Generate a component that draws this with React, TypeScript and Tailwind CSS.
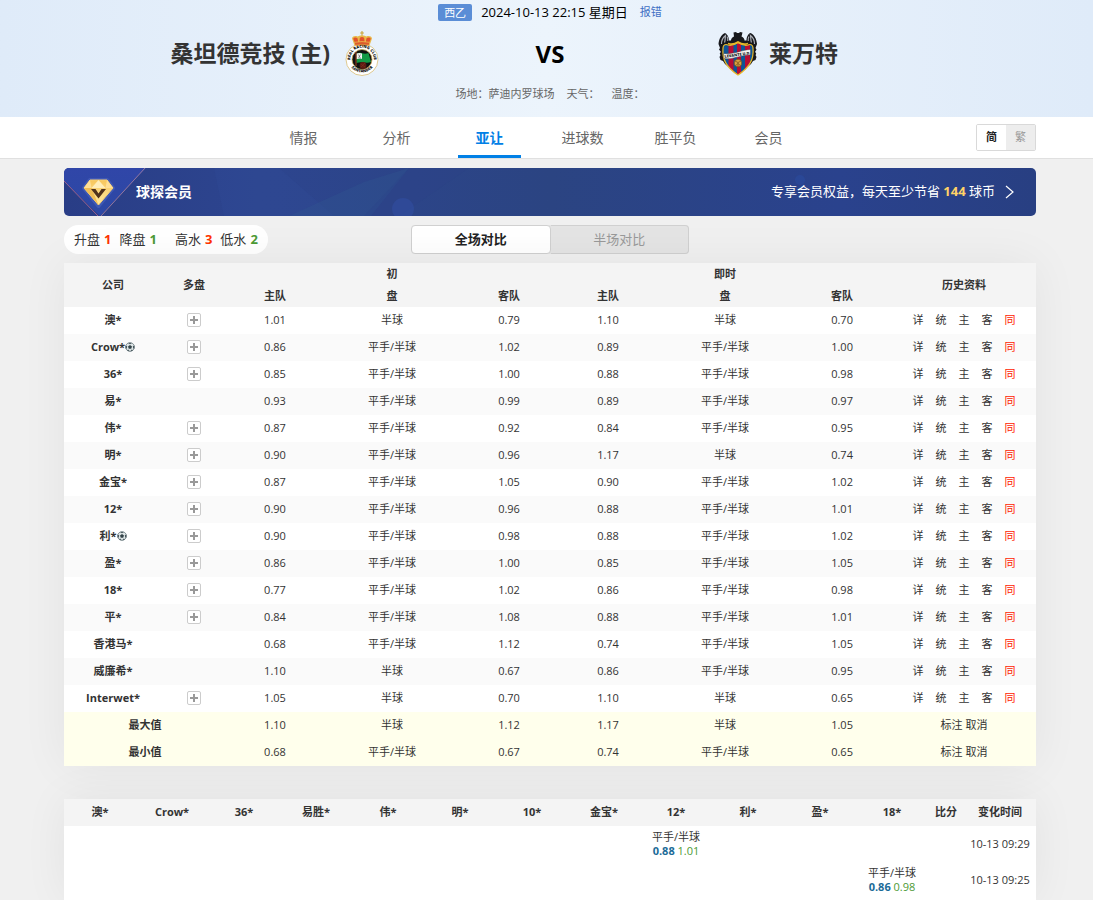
import React from "react";

const tabs = ["情报", "分析", "亚让", "进球数", "胜平负", "会员"];

type OddsRow = {
  name: string;
  ball?: boolean;
  more?: boolean;
  odds: string[];
};

const P = "平手/半球";
const B = "半球";

const rows: OddsRow[] = [
  { name: "澳*", more: true, odds: ["1.01", B, "0.79", "1.10", B, "0.70"] },
  { name: "Crow*", ball: true, more: true, odds: ["0.86", P, "1.02", "0.89", P, "1.00"] },
  { name: "36*", more: true, odds: ["0.85", P, "1.00", "0.88", P, "0.98"] },
  { name: "易*", odds: ["0.93", P, "0.99", "0.89", P, "0.97"] },
  { name: "伟*", more: true, odds: ["0.87", P, "0.92", "0.84", P, "0.95"] },
  { name: "明*", more: true, odds: ["0.90", P, "0.96", "1.17", B, "0.74"] },
  { name: "金宝*", more: true, odds: ["0.87", P, "1.05", "0.90", P, "1.02"] },
  { name: "12*", more: true, odds: ["0.90", P, "0.96", "0.88", P, "1.01"] },
  { name: "利*", ball: true, more: true, odds: ["0.90", P, "0.98", "0.88", P, "1.02"] },
  { name: "盈*", more: true, odds: ["0.86", P, "1.00", "0.85", P, "1.05"] },
  { name: "18*", more: true, odds: ["0.77", P, "1.02", "0.86", P, "0.98"] },
  { name: "平*", more: true, odds: ["0.84", P, "1.08", "0.88", P, "1.01"] },
  { name: "香港马*", odds: ["0.68", P, "1.12", "0.74", P, "1.05"] },
  { name: "威廉希*", odds: ["1.10", B, "0.67", "0.86", P, "0.95"] },
  { name: "Interwet*", more: true, odds: ["1.05", B, "0.70", "1.10", B, "0.65"] },
];

const summary = [
  { name: "最大值", odds: ["1.10", B, "1.12", "1.17", B, "1.05"] },
  { name: "最小值", odds: ["0.68", P, "0.67", "0.74", P, "0.65"] },
];

const companies = ["澳*", "Crow*", "36*", "易胜*", "伟*", "明*", "10*", "金宝*", "12*", "利*", "盈*", "18*"];

const changes = [
  { col: 8, home: "0.88", away: "1.01", time: "10-13 09:29" },
  { col: 11, home: "0.86", away: "0.98", time: "10-13 09:25" },
];

const HomeCrest = () => (
  <svg viewBox="0 0 40 46" className="h-[46px] w-10 shrink-0" aria-hidden="true">
    <circle cx="20" cy="28.500" r="16" fill="#fff" stroke="#d8bd74" strokeWidth=".8" />
    <path d="M19.500 0h1v1.500h1.300v1h-1.300V5h-1V2.500h-1.300v-1h1.300z" fill="#c9a02c" />
    <path d="M12.500 14.500 10 7.500c.5-2.500 3.500-3 5.500-2C17 4 23 4 24.500 5.500c2-1 5-.5 5.500 2l-2.500 7z" fill="#e9b94a" />
    <path d="M13 12l-1.800-4.200c.8-1.800 3-1.800 4.300-.5l1 4.700zM17.300 11.500 17.800 7c1-1.500 3.400-1.500 4.400 0l.5 4.500zM23.500 12l1-4.700c1.300-1.300 3.500-1.300 4.300.5L27 12z" fill="#e2522c" />
    <path d="M12.800 11h14.400l-.5 3.500H13.300z" fill="#dc5a2c" />
    <path d="M12.600 11.300q7.400-1.500 14.800 0M13.300 14.300q6.700-1 13.400 0" fill="none" stroke="#f0c650" strokeWidth=".7" />
    <circle cx="20" cy="28.500" r="10" fill="#111" stroke="#c9a955" strokeWidth=".8" />
    <path d="M14.500 22.500c4.500-2 6.500 1.500 12-.5l2.500 9c-5 2-9-1-14.500 1z" fill="#149a45" />
    <path d="M14.500 22.500c2.500-1 4-.6 5.500 0v5.500c-2-.8-3.500-.6-5.500.3z" fill="#f3f3f3" />
    <path d="M16.500 23.500l1.800 3.500M18.500 23.500l-2 3.500" stroke="#444" strokeWidth=".5" />
    <path d="M14 21v14" stroke="#a03a20" strokeWidth="1" />
    <circle cx="21" cy="34.500" r="3.400" fill="#5d1c12" />
    <path d="M19 33l4 3m0-4-4 4" stroke="#8d3421" strokeWidth=".5" />
    <path id="crest-top" d="M8.500 31a11.800 11.800 0 1 1 23 0" fill="none" />
    <path id="crest-bottom" d="M6.500 32a14.400 14.400 0 0 0 27 0" fill="none" />
    <g fontFamily="Open Sans, sans-serif" fontWeight="800" fontSize="3.900" fill="#111" textAnchor="middle">
      <text>
        <textPath href="#crest-top" startOffset="50%">REAL RACING CLUB</textPath>
      </text>
      <text>
        <textPath href="#crest-bottom" startOffset="50%">SANTANDER</textPath>
      </text>
    </g>
  </svg>
);

const AwayCrest = () => (
  <svg viewBox="0 0 40 46" className="h-[46px] w-10 shrink-0" aria-hidden="true">
    <path
      d="M15.500 1.500 18 1l1 1h2l1-1 2.500.5-1 4c2 1 3 2 3 4h2c0-4 2-7 4-7.500 4 2 6 6 6.500 11l-1.500 4 1 1.500-1.500 2.500c1.500 1 1.500 2 .5 3l1 2-1 3-2.500 1-2 3-13 11-13-11-2-3-2.500-1-1-3 1-2c-1-1-1-2 .5-3L1 18.500 2 17 .5 13C1 8 3 4 7 2c2 1 4 4 4 7.500h2c0-2 1-3 3-4z"
      fill="#17181c"
    />
    <path d="M3.500 13c0-4 2-7 4-8.500-.5 3 0 4.500-1 7M36.500 13c0-4-2-7-4-8.500.5 3 0 4.500 1 7M9 5.500c1 1.500 1 3 .8 4.500M31 5.500c-1 1.500-1 3-.8 4.500" fill="none" stroke="#a9adb5" strokeWidth="1.200" />
    <clipPath id="shield">
      <path d="M5 17c0-3.500 3-4 5-3 3 1 6 0 10-2.500 4 2.500 7 3.500 10 2.500 2-1 5-.5 5 3 1 11-3 19-15 27C8 36 4 28 5 17z" />
    </clipPath>
    <g clipPath="url(#shield)">
      <path d="M3 10h34v35H3z" fill="#0e5596" />
      <path d="M10.500 10h5v35h-5zM19 10h4v35h-4zM27 10h5v35h-5z" fill="#b80d35" />
    </g>
    <path
      d="M5 17c0-3.500 3-4 5-3 3 1 6 0 10-2.500 4 2.500 7 3.500 10 2.500 2-1 5-.5 5 3 1 11-3 19-15 27C8 36 4 28 5 17z"
      fill="none"
      stroke="#e8b92a"
      strokeWidth="1.200"
    />
    <path d="M10 12.500c4 1.500 7 .5 10-1.500 3 2 6 3 10 1.500" fill="none" stroke="#e8b92a" strokeWidth="1.800" />
    <path d="M5.500 22.500c9.500 1.500 19-4 27-4v5.500c-8.500-.5-18 5-26.500 3.500z" fill="#f2f2f2" stroke="#333" strokeWidth=".4" />
    <text x="19.500" y="25" textAnchor="middle" fontFamily="Open Sans, sans-serif" fontWeight="800" fontSize="3.800" fill="#222" transform="rotate(-8 20 24)">
      LEVANTE U.D.
    </text>
    <circle cx="20" cy="32" r="3.800" fill="#d9a441" stroke="#6a4212" strokeWidth=".6" />
    <path d="M17 30l3 1.500 3-1.500M20 31.500V35M17.500 34.500 20 32.500l2.500 2" fill="none" stroke="#6a4212" strokeWidth=".6" />
  </svg>
);

const BallIcon = () => (
  <svg viewBox="0 0 10 10" className="h-[10px] w-[10px]" aria-hidden="true">
    <circle cx="5" cy="5" r="4.400" fill="#dfe6e7" stroke="#7d8b8e" strokeWidth=".9" />
    <path d="M5 3 7 4.500 6.200 6.700H3.800L3 4.500z" fill="#334348" />
    <path d="M3 .9h4L5 2.300zM.6 3.500 2.200 4.300 1.800 6.500.7 6.700zM9.400 3.500 7.800 4.300l.4 2.200 1.100.2zM2.200 8.800l.8-1.600 1.700 2.100zM7.800 8.800 7 7.200 5.300 9.300z" fill="#46565b" />
  </svg>
);

const BannerArt = () => (
  <svg viewBox="0 0 972 48" preserveAspectRatio="xMinYMid slice" className="absolute inset-0 h-full w-full" aria-hidden="true">
    <defs>
      <linearGradient id="banner-bg">
        <stop offset="0" stopColor="#293d86" />
        <stop offset=".2" stopColor="#2d458f" />
        <stop offset=".5" stopColor="#2b4482" />
        <stop offset=".8" stopColor="#2a428d" />
        <stop offset="1" stopColor="#283f82" />
      </linearGradient>
      <linearGradient id="banner-wedge" x2="0" y2="1">
        <stop offset="0" stopColor="#3046a8" />
        <stop offset="1" stopColor="#2c48a4" />
      </linearGradient>
      <linearGradient id="gem" x2="0" y2="1">
        <stop offset="0" stopColor="#f7c65c" />
        <stop offset="1" stopColor="#ffe9a0" />
      </linearGradient>
    </defs>
    <path d="M0 0h972v48H0z" fill="url(#banner-bg)" />
    <path d="M150 0h65l55 48H160z" fill="#314b98" opacity=".3" />
    <path d="M225 48 300 14l45-14-38 48z" fill="#315892" opacity=".3" />
    <path d="M300 48 345 0h60l-70 48z" fill="#2a4088" opacity=".25" />
    <circle cx="339" cy="41" r="11" fill="#3150a5" opacity=".5" />
    <circle cx="736" cy="12" r="5" fill="#2b4a9b" opacity=".7" />
    <path d="M0 0h82L36 48 0 13z" fill="url(#banner-wedge)" />
    <path d="M0 13 34 48" stroke="#a9668e" strokeWidth=".9" />
    <path d="M81 0 37 48" stroke="#a17d9c" strokeWidth=".9" />
    <path d="M26 12h17l6 8-14.500 18L20 20z" fill="#6680d8" stroke="#6680d8" strokeWidth="4" strokeLinejoin="round" opacity=".3" />
    <path d="M26 12h17l6 8-14.500 17L20 20z" fill="url(#gem)" stroke="#f6cf75" strokeWidth="1" strokeLinejoin="round" />
    <path d="M26 12l-6 8h7.500zM43 12l6 8h-7.500z" fill="#ffdf95" />
    <path d="M34.500 12 27.500 20h14z" fill="#ffedb9" />
    <path d="M20 20h7.500l7 17z" fill="#f0bc55" />
    <path d="M27 21h4.500l3 4.500 3-4.500H42L34.500 30.500z" fill="#50321c" />
  </svg>
);

const MoreButton = () => (
  <button type="button" aria-label="展开" className="flex h-[14px] w-[14px] items-center justify-center rounded-xs border border-[#ccc] bg-white">
    <svg viewBox="0 0 8 8" className="h-2 w-2" aria-hidden="true">
      <path d="M4 0v8M0 4h8" stroke="#999" strokeWidth="2" />
    </svg>
  </button>
);

const Stat = ({ label, value, up }: { label: string; value: string; up?: boolean }) => (
  <span className="flex gap-1">
    {label}
    <b className={up ? "text-[#ff3300]" : "text-[#4c9a35]"}>{value}</b>
  </span>
);

const MatchHeader = () => (
  <header className="h-[117px] bg-linear-to-r from-[#dfebf9] via-[#ecf4fc] to-[#dfebf9] pr-[57px] pl-16">
    <div className="flex h-[25px] items-center justify-center">
      <a href="#" className="mr-[9px] rounded-xs bg-[#5a8dd6] px-[6px] text-[11px] leading-[17px] text-white">
        西乙
      </a>
      <time className="mr-3 text-[13px] text-black">2024-10-13 22:15 星期日</time>
      <a href="#" className="text-[11px] text-[#3f6fc4]">报错</a>
    </div>
    <div className="flex h-[57px] items-center text-[23px] font-bold text-[#333]">
      <a href="#" className="flex flex-1 items-center justify-end gap-3">
        桑坦德竞技 (主)
        <HomeCrest />
      </a>
      <div className="w-[336px] text-center text-2xl text-black">VS</div>
      <a href="#" className="flex flex-1 items-center gap-[11px]">
        <AwayCrest />
        莱万特
      </a>
    </div>
    <div className="flex h-6 items-center justify-center gap-3 text-[11px] text-[#666]">
      <span>场地：萨迪内罗球场</span>
      <span>天气：</span>
      <span>温度：</span>
    </div>
  </header>
);

const NavBar = () => (
  <nav className="flex h-[42px] items-center justify-between border-b border-[#e0e0e0] bg-white pr-[57px] pl-16">
    <div className="flex h-full gap-[30px] pl-[208px] text-sm text-[#666]">
      {tabs.map((tab) => (
        <a
          key={tab}
          href="#"
          className={
            tab === "亚让"
              ? "flex w-[63px] items-center justify-center border-y-3 border-t-transparent border-b-[#0080e6] font-bold text-[#0080e6]"
              : "flex w-[63px] items-center justify-center"
          }
        >
          {tab}
        </a>
      ))}
    </div>
    <div className="flex h-[27px] w-[60px] overflow-hidden rounded-xs border border-[#d9d9d9] text-[11px]">
      <button type="button" className="flex-1 bg-white font-bold text-[#222]">简</button>
      <button type="button" className="flex-1 bg-[#ededed] text-[#999]">繁</button>
    </div>
  </nav>
);

const OddsTable = () => (
  <table className="w-full table-fixed bg-white text-center text-[11px] leading-[15px] text-[#333] shadow-[0_0_45px_rgba(0,0,0,0.06)] [&_td]:pb-0.5 [&_th]:pb-0.5">
    <colgroup>
      <col className="w-[98px]" />
      <col className="w-16" />
      <col className="w-[98px]" />
      <col className="w-[136px]" />
      <col className="w-[98px]" />
      <col className="w-[100px]" />
      <col className="w-[134px]" />
      <col className="w-[100px]" />
      <col className="w-36" />
    </colgroup>
    <thead className="bg-[#f4f4f4]">
      <tr className="h-[22px]">
        <th rowSpan={2}>公司</th>
        <th rowSpan={2}>多盘</th>
        <th colSpan={3}>初</th>
        <th colSpan={3}>即时</th>
        <th rowSpan={2}>历史资料</th>
      </tr>
      <tr className="h-[22px]">
        <th>主队</th>
        <th>盘</th>
        <th>客队</th>
        <th>主队</th>
        <th>盘</th>
        <th>客队</th>
      </tr>
    </thead>
    <tbody>
      {rows.map((row) => (
        <tr key={row.name} className="h-[27px] even:bg-[#fafafa]">
          <th scope="row">
            <span className="flex items-center justify-center">
              {row.name}
              {row.ball && <BallIcon />}
            </span>
          </th>
          <td>
            <div className="flex justify-center">{row.more && <MoreButton />}</div>
          </td>
          {row.odds.map((value, i) => (
            <td key={i}>{value}</td>
          ))}
          <td>
            <div className="flex justify-center gap-3">
              <a href="#">详</a>
              <a href="#">统</a>
              <a href="#">主</a>
              <a href="#">客</a>
              <a href="#" className="text-[#ff2200]">同</a>
            </div>
          </td>
        </tr>
      ))}
      {summary.map((row) => (
        <tr key={row.name} className="h-[27px] bg-[#ffffec]">
          <th scope="row" colSpan={2}>{row.name}</th>
          {row.odds.map((value, i) => (
            <td key={i}>{value}</td>
          ))}
          <td>
            <a href="#">标注</a> <a href="#">取消</a>
          </td>
        </tr>
      ))}
    </tbody>
  </table>
);

const ChangesTable = () => (
  <div className="bg-white pb-0.5 shadow-[0_0_45px_rgba(0,0,0,0.06)]">
    <table className="w-full table-fixed text-center text-[11px] leading-[14px] text-[#333]">
      <thead className="bg-[#f4f4f4]">
        <tr className="h-[27px]">
          {companies.map((name) => (
            <th key={name} className="pb-0.5">{name}</th>
          ))}
          <th className="w-9 pb-0.5">比分</th>
          <th className="w-[72px] pb-0.5">变化时间</th>
        </tr>
      </thead>
      <tbody>
        {changes.map((change) => (
          <tr key={change.time} className="h-9">
            {companies.map((name, i) => (
              <td key={name}>
                {i === change.col && (
                  <>
                    {P}
                    <br />
                    <b className="text-[#1b6b98]">{change.home}</b>{" "}
                    <span className="text-[#4c9a35]">{change.away}</span>
                  </>
                )}
              </td>
            ))}
            <td></td>
            <td className="whitespace-nowrap">{change.time}</td>
          </tr>
        ))}
      </tbody>
    </table>
  </div>
);

const App: React.FC = () => {
  return (
    <div className="min-h-screen bg-[#f0f0f0] font-['Open_Sans','Noto_Sans_CJK_SC',sans-serif]">
      <MatchHeader />
      <NavBar />
      <main className="pt-[9px] pr-[57px] pl-16">
        <a href="#" className="relative flex h-12 items-center justify-between overflow-hidden rounded-[5px] pr-[22px] pl-[72px] text-white">
          <BannerArt />
          <b className="relative text-sm">球探会员</b>
          <span className="relative flex items-center gap-[10px] text-[13px]">
            <span>
              专享会员权益，每天至少节省 <b className="text-[#ffd267]">144</b> 球币
            </span>
            <svg viewBox="0 0 9 14" className="h-[14px] w-[9px]" aria-hidden="true">
              <path d="M1 1l7 6-7 6" fill="none" stroke="#fff" strokeWidth="1.200" />
            </svg>
          </span>
        </a>

        <div className="grid grid-cols-[1fr_278px_1fr] py-[9px] text-[13px]">
          <div className="flex h-[29px] items-center justify-self-start rounded-full bg-white px-[10px] text-[#333]">
            <div className="mr-[18px] flex gap-2">
              <Stat label="升盘" value="1" up />
              <Stat label="降盘" value="1" />
            </div>
            <div className="flex gap-2">
              <Stat label="高水" value="3" up />
              <Stat label="低水" value="2" />
            </div>
          </div>
          <div className="flex h-[29px] rounded bg-[#e4e4e4]">
            <button type="button" className="flex-1 rounded border border-[#d0d0d0] bg-white font-bold text-[#222]">
              全场对比
            </button>
            <button type="button" className="flex-1 rounded-r border border-l-0 border-[#d0d0d0] text-[#999]">
              半场对比
            </button>
          </div>
        </div>

        <div className="flex flex-col gap-[33px]">
          <OddsTable />
          <ChangesTable />
        </div>
      </main>
    </div>
  );
};

export default App;
